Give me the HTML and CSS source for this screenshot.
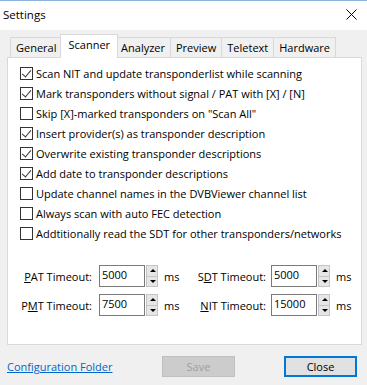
FILE: index.html
```html
<!DOCTYPE html>
<html lang="en">
<head>
    <meta charset="UTF-8">
    <link rel="stylesheet" href="styles.css">
    <title>Settings</title>
</head>
<body>
    <div class="window">
        <div class="titlebar">
            <span class="title">Settings</span>
            <svg class="close-x" width="11" height="11" viewBox="0 0 11 11">
                <path d="M0.5 0.5 L10.5 10.5 M10.5 0.5 L0.5 10.5" stroke="#000" stroke-width="1"/>
            </svg>
        </div>

        <div class="content">
            <div class="tabs">
                <div class="tab">General</div>
                <div class="tab active">Scanner</div>
                <div class="tab">Analyzer</div>
                <div class="tab">Preview</div>
                <div class="tab">Teletext</div>
                <div class="tab">Hardware</div>
            </div>

            <div class="panel">
                <ul class="options">
                    <li><span class="box checked"></span>Scan NIT and update transponderlist while scanning</li>
                    <li><span class="box checked"></span>Mark transponders without signal / PAT with [X] / [N]</li>
                    <li><span class="box"></span>Skip [X]-marked transponders on "Scan All"</li>
                    <li><span class="box checked"></span>Insert provider(s) as transponder description</li>
                    <li><span class="box checked"></span>Overwrite existing transponder descriptions</li>
                    <li><span class="box checked"></span>Add date to transponder descriptions</li>
                    <li><span class="box"></span>Update channel names in the DVBViewer channel list</li>
                    <li><span class="box"></span>Always scan with auto FEC detection</li>
                    <li><span class="box"></span>Addtitionally read the SDT for other transponders/networks</li>
                </ul>

                <div class="timeouts">
                    <span class="label"><u>P</u>AT Timeout:</span>
                    <span class="field">5000</span>
                    <span class="spin"><span class="up"></span><span class="down"></span></span>
                    <span class="unit">ms</span>
                    <span class="label right">S<u>D</u>T Timeout:</span>
                    <span class="field">5000</span>
                    <span class="spin"><span class="up"></span><span class="down"></span></span>
                    <span class="unit">ms</span>

                    <span class="label">P<u>M</u>T Timeout:</span>
                    <span class="field">7500</span>
                    <span class="spin"><span class="up"></span><span class="down"></span></span>
                    <span class="unit">ms</span>
                    <span class="label right"><u>N</u>IT Timeout:</span>
                    <span class="field">15000</span>
                    <span class="spin"><span class="up"></span><span class="down"></span></span>
                    <span class="unit">ms</span>
                </div>
            </div>

            <div class="footer">
                <a href="#" class="folder-link">Configuration Folder</a>
                <button class="btn save" disabled>Save</button>
                <button class="btn close">Close</button>
            </div>
        </div>
    </div>
</body>
</html>
```

FILE: styles.css
```css
body {
    margin: 0;
    padding: 0;
    font-family: 'Open Sans', 'Noto Sans', sans-serif;
    font-size: 11px;
    color: #000000;
    background-color: #f0f0f0;
    white-space: nowrap;
}

.window {
    width: 367px;
    height: 385px;
    overflow: hidden;
}

.titlebar {
    height: 29px;
    border-top: 1px solid #8ab4dc; /* accent line of the window frame */
    background-color: #ffffff;
    display: flex;
    align-items: center;
    padding-left: 3px;
    padding-right: 10px;
}

.title {
    flex: 1;
    font-size: 11.5px;
    margin-top: -3px;
}

.close-x {
    margin-top: -3px;
}

.content {
    padding: 5px 5px 0 7px;
}

/* tab strip */
.tabs {
    display: flex;
    align-items: flex-end;
    padding-left: 3px;
    height: 22px;
}

.tab {
    height: 19px;
    line-height: 19px;
    padding: 0 5px;
    border: 1px solid #d9d9d9;
    border-bottom: none;
    border-left: none;
    background-color: #f0f0f0;
}

.tab:first-child {
    border-left: 1px solid #d9d9d9;
}

.tab.active {
    height: 23px;
    line-height: 20px;
    margin: 0 -2px -1px -2px;
    padding: 0 7px;
    background-color: #ffffff;
    border-left: 1px solid #d9d9d9;
    position: relative;
    z-index: 1;
}

.panel {
    border: 1px solid #d9d9d9;
    background-color: #ffffff;
    height: 286px;
}

/* checkbox list */
.options {
    list-style: none;
    margin: 0;
    padding: 5px 0 0 12px;
}

.options li {
    height: 20px;
    display: flex;
    align-items: center;
}

.box {
    width: 11px;
    height: 11px;
    border: 1px solid #333333;
    background-color: #ffffff;
    margin-right: 3px;
    position: relative;
    flex-shrink: 0;
}

.box.checked::after {
    content: "";
    position: absolute;
    left: 3px;
    top: 0px;
    width: 4px;
    height: 8px;
    border-right: 1px solid #333333;
    border-bottom: 1px solid #333333;
    transform: rotate(40deg);
}

/* timeout fields */
.timeouts {
    display: grid;
    grid-template-columns: 91px 46px 13px 35px 78px 46px 13px auto;
    grid-auto-rows: 22px;
    row-gap: 7px;
    margin-top: 22px;
    align-items: center;
}

.label {
    text-align: right;
    padding-right: 7px;
}

.label.right {
    padding-right: 5px;
}

.field {
    line-height: 17px;
    border: 1px solid #7a7a7a;
    padding-left: 2px;
    background-color: #ffffff;
    box-sizing: border-box;
    height: 22px;
}

.spin {
    display: flex;
    flex-direction: column;
    height: 22px;
    margin-left: 1px;
}

.spin span {
    flex: 1;
    background-color: #e6e6e6;
    border: 1px solid #c4c4c4;
    position: relative;
}

.spin .down {
    border-top: none;
}

.spin .up::after,
.spin .down::after {
    content: "";
    position: absolute;
    left: 3px;
    border-left: 3px solid transparent;
    border-right: 3px solid transparent;
}

.spin .up::after {
    top: 3px;
    border-bottom: 3px solid #000000;
}

.spin .down::after {
    top: 3px;
    border-top: 3px solid #000000;
}

.unit {
    padding-left: 6px;
}

/* bottom row */
.footer {
    display: flex;
    align-items: center;
    padding-top: 11px;
}

.folder-link {
    color: #0066cc;
    text-decoration: underline;
}

.btn {
    width: 73px;
    height: 21px;
    font-family: inherit;
    font-size: 11px;
    padding: 0;
}

.btn.save {
    margin-left: auto;
    background-color: #cccccc;
    border: 1px solid #bfbfbf;
    color: #a0a0a0;
}

.btn.close {
    margin-left: 49px;
    margin-right: 5px;
    background-color: #e1e1e1;
    border: 2px solid #0078d7;
    color: #000000;
}
```
